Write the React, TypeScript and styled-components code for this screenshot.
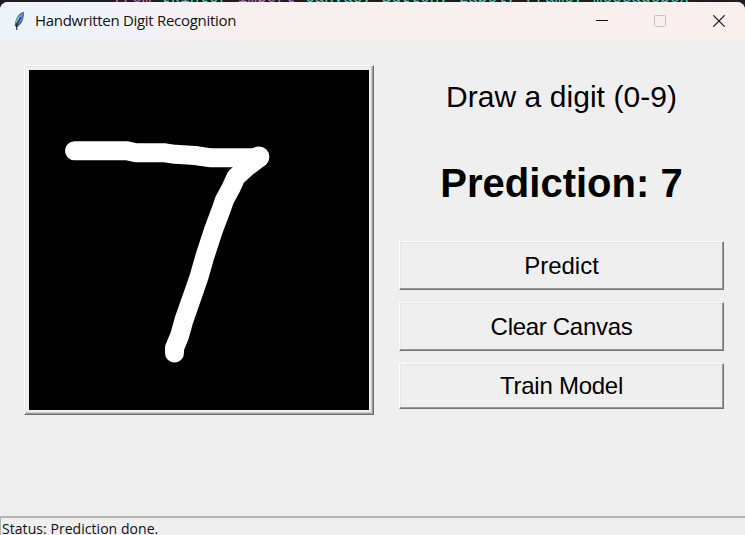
import React from "react";
import styled, { createGlobalStyle } from "styled-components";

const GlobalStyle = createGlobalStyle`
  body { margin: 0; background: #1f1b1e; overflow: hidden; }
  * { box-sizing: border-box; }
`;

const Desktop = styled.div`
  width: 745px;
  height: 535px;
  display: flex;
  flex-direction: column;
  overflow: hidden;
  background: #1f1b1e;
`;

const EditorStrip = styled.div`
  height: 2px;
  overflow: hidden;
  padding-left: 113px;
  white-space: pre;
  font: 16px/16px "Liberation Mono", monospace;
  color: #4ed6b8;
`;

const EditorLine = styled.div`
  margin-top: -10px;
`;

const Keyword = styled.span`
  color: #c878c2;
`;

const Window = styled.div`
  flex: 1;
  display: flex;
  flex-direction: column;
  min-height: 0;
  border-radius: 8px 8px 0 0;
  overflow: hidden;
  background: #efefef;
`;

const TitleBar = styled.header`
  height: 38px;
  flex: none;
  display: flex;
  align-items: center;
  padding-left: 12px;
  background: linear-gradient(90deg, #edf4f9 0, #f0f3fb 90px, #f4f1f7 150px, #f8f0ef 250px, #f9f0ee 100%);
`;

const Title = styled.h1`
  margin: -2px auto 0 8px;
  font: 400 15px/20px "Open Sans", sans-serif;
  letter-spacing: -0.3px;
  color: #111;
  white-space: nowrap;
`;

const WindowControl = styled.span<{ $muted?: boolean }>`
  width: 58.5px;
  height: 38px;
  display: flex;
  align-items: center;
  justify-content: center;
  color: ${(p) => (p.$muted ? "#c6c0be" : "#111")};
`;

const Controls = styled.div`
  display: flex;
  margin-right: -3px;
`;

const Body = styled.main`
  flex: 1;
  display: flex;
  align-items: flex-start;
  padding: 25px 21px 0 24px;
  gap: 25px;
`;

const DrawingFrame = styled.div`
  width: 350px;
  height: 350px;
  flex: none;
  border: 1px solid;
  border-color: #fff #6f6f6f #6f6f6f #fff;
  box-shadow: inset -1px -1px #9c9c9c, inset 1px 1px #e5e5e5, inset -2px -2px #c9c9c9;
  padding: 4px;
`;

const Drawing = styled.svg`
  display: block;
  width: 340px;
  height: 340px;
  background: #000;
`;

const Panel = styled.section`
  width: 325px;
  display: flex;
  flex-direction: column;
  color: #000;
  font-family: "Liberation Sans", Arial, sans-serif;
  text-align: center;
`;

const Prompt = styled.p`
  margin: 15px 0 0;
  font-size: 30px;
  line-height: 34px;
  letter-spacing: 0.05px;
`;

const Prediction = styled.p`
  margin: 46px 0 0;
  font-size: 40px;
  font-weight: 700;
  line-height: 46px;
`;

const ButtonStack = styled.div`
  display: flex;
  flex-direction: column;
  gap: 12px;
  margin-top: 35px;
`;

const ActionButton = styled.button<{ $height: number; $spacing?: number }>`
  height: ${(p) => p.$height}px;
  padding: 0;
  border: 1px solid;
  border-color: #fdfdfd #747474 #747474 #fdfdfd;
  border-radius: 0;
  background: #efefef;
  box-shadow: inset -1px -1px #9b9b9b, inset 1px 1px #e5e5e5;
  color: #000;
  font: 24px/28px "Liberation Sans", Arial, sans-serif;
  letter-spacing: ${(p) => p.$spacing ?? 0}px;
`;

const StatusBar = styled.footer`
  height: 19px;
  flex: none;
  padding-left: 1px;
  border-top: 2px solid #b4b4b4;
  border-left: 1px solid #b4b4b4;
  font: 14px/21px "Open Sans", sans-serif;
  letter-spacing: 0.05px;
  color: #111;
  white-space: nowrap;
`;

const Feather = () => (
  <svg width="15" height="20" viewBox="0 0 15 20">
    <path d="M11.5 .7C7 2.2 3 7 2.8 15L5 16.3C9 13.5 12 9 11.9 2Z" fill="#4a5664" />
    <path d="M11 1.8C7.5 4 6.5 6 5 11L6 14C9.5 11 11 7 11 1.8Z" fill="#4f97ee" />
    <path d="M9 3.2C5.7 5.5 3.5 9 3.5 13.5L5.7 9Z" fill="#9bb9d5" />
    <path d="M9 6L4.6 14.5L4.8 19" fill="none" stroke="#15191e" strokeWidth="1" />
  </svg>
);

export default function App() {
  return (
    <>
      <GlobalStyle />
      <Desktop>
        <EditorStrip>
          <EditorLine>
            <Keyword>from</Keyword> tkinter <Keyword>import</Keyword> Canvas, Button, Label, Frame, messagebox
          </EditorLine>
        </EditorStrip>
        <Window>
          <TitleBar>
            <Feather />
            <Title>Handwritten Digit Recognition</Title>
            <Controls>
              <WindowControl>
                <svg width="12" height="12" viewBox="0 0 12 12">
                  <path d="M0 5.5H12" stroke="currentColor" />
                </svg>
              </WindowControl>
              <WindowControl $muted>
                <svg width="12" height="12" viewBox="0 0 12 12">
                  <rect x=".5" y=".5" width="11" height="11" rx="1" fill="none" stroke="currentColor" />
                </svg>
              </WindowControl>
              <WindowControl>
                <svg width="12" height="12" viewBox="0 0 12 12">
                  <path d="M.3 .3L11.7 11.7M11.7 .3L.3 11.7" stroke="currentColor" strokeWidth="1.2" />
                </svg>
              </WindowControl>
            </Controls>
          </TitleBar>
          <Body>
            <DrawingFrame>
              <Drawing viewBox="29 70 340 340">
                <g fill="none" stroke="#fff" strokeWidth="19" strokeLinecap="round" strokeLinejoin="round">
                  <path d="M74.5 150.8H127L136 152.8H165L175 154.3L195 155.5L211 157.8H258" />
                  <path d="M259 158L247 167L236 177L231 188L224.5 200L221 210L213.5 230L205 256L199 277L194.5 290L184 320L179.5 336L174.5 348V353" />
                </g>
                <circle cx="259" cy="156.8" r="10.4" fill="#fff" />
              </Drawing>
            </DrawingFrame>
            <Panel>
              <Prompt>Draw a digit (0-9)</Prompt>
              <Prediction>Prediction: 7</Prediction>
              <ButtonStack>
                <ActionButton $height={49}>Predict</ActionButton>
                <ActionButton $height={49} $spacing={-0.3}>Clear Canvas</ActionButton>
                <ActionButton $height={46} $spacing={-0.25}>Train Model</ActionButton>
              </ButtonStack>
            </Panel>
          </Body>
          <StatusBar>Status: Prediction done.</StatusBar>
        </Window>
      </Desktop>
    </>
  );
}
